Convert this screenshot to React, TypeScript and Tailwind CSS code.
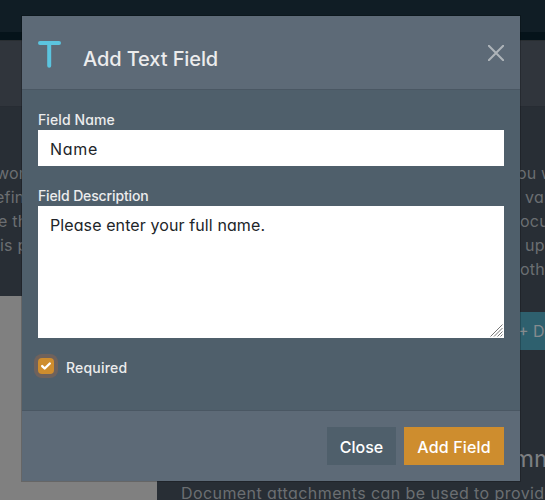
import { useState } from "react";

const introLines = [
  { start: "work", startClass: "-ml-[4px]", end: "you will", endClass: "ml-[508px]" },
  { start: "efine", startClass: "-ml-[5px]", end: "value", endClass: "ml-[525px]" },
  { start: "e the", startClass: "-ml-[2px]", end: "ocument", endClass: "ml-[520px]" },
  { start: "is pa", startClass: "ml-0", end: "upload", endClass: "ml-[525px]" },
  { start: "", startClass: "ml-0", end: "both", endClass: "ml-[510px]" },
];

function PageBehind() {
  return (
    <div className="h-[500px] overflow-hidden bg-[#282e35] text-[#6b6e72]">
      <div className="h-10 border-b-8 border-[#05131a] bg-[#101d25]" />
      <div className="h-[67px] border-y border-t-[#292e32] border-b-[#272c33] bg-[#30353c]" />
      <div className="h-[189px] pt-[54px]">
        {introLines.map((line) => (
          <div key={line.end} className="grid h-6 text-base leading-6 tracking-[0.2px] whitespace-nowrap">
            <span className={`col-start-1 row-start-1 ${line.startClass}`}>{line.start}</span>
            <span className={`col-start-1 row-start-1 ${line.endClass}`}>{line.end}</span>
          </div>
        ))}
      </div>
      <div className="flex h-[204px]">
        <div className="w-[157px] shrink-0 bg-[#808080]" />
        <div className="flex w-[388px] shrink-0 flex-col overflow-hidden pt-4 whitespace-nowrap">
          <div className="ml-[350px] h-[38px] w-[160px] bg-[#2e606e] pl-[11px] text-base leading-[39px] text-[#858b8e]">
            + Document
          </div>
          <div className="mt-[91px] ml-[356px] h-9 text-2xl leading-9 text-[#7c7f82]">mments</div>
          <p className="mt-1 ml-6 text-base leading-6 tracking-[0.42px]">
            Document attachments can be used to provide
          </p>
        </div>
      </div>
    </div>
  );
}

function TextIcon() {
  return (
    <svg width="23" height="27" viewBox="0 0 23 27" fill="none" stroke="#5bc4df" strokeWidth="4" strokeLinecap="round">
      <path d="M2 2h19M11.2 2v22.8" />
    </svg>
  );
}

export default function App() {
  const [name, setName] = useState("Name");
  const [description, setDescription] = useState("Please enter your full name.");
  const [required, setRequired] = useState(true);

  return (
    <div className="relative h-[500px] w-[545px] overflow-hidden font-['Inter',sans-serif] [font-feature-settings:'cv11']">
      <PageBehind />
      <div
        role="dialog"
        className="absolute top-[15px] left-[21px] flex h-[467px] w-[500px] flex-col border border-black/20 bg-[#4f5f6b] bg-clip-padding text-[#ececed]"
      >
        <header className="flex h-[74px] shrink-0 border-b border-[#4a5763] bg-[#5d6a77] px-4">
          <span className="mt-[25px]">
            <TextIcon />
          </span>
          <h2 className="mt-[28px] ml-[22px] text-xl leading-[30px] font-medium tracking-[-0.1px]">Add Text Field</h2>
          <button aria-label="Close dialog" className="mt-[29px] ml-auto h-4 w-4">
            <svg width="16" height="16" viewBox="0 0 16 16" stroke="#aeb4b9" strokeWidth="2" strokeLinecap="round">
              <path d="M.8.8l14.4 14.4M15.2.8L.8 15.2" />
            </svg>
          </button>
        </header>
        <div className="flex flex-1 flex-col px-4 pt-[19px]">
          <label htmlFor="name" className="h-[21px] text-sm leading-[21px] font-medium tracking-[0.1px]">Field Name</label>
          <input
            id="name"
            value={name}
            onChange={(e) => setName(e.target.value)}
            className="h-9 bg-white px-3 pt-0.5 text-base tracking-[0.7px] text-[#212529] outline-none"
          />
          <label htmlFor="description" className="mt-[19px] h-[21px] text-sm leading-[21px] font-medium tracking-[-0.13px]">Field Description</label>
          <div className="relative h-[132px] shrink-0">
            <textarea
              id="description"
              value={description}
              onChange={(e) => setDescription(e.target.value)}
              className="block h-full w-full resize-none bg-white px-3 py-[7px] text-base leading-6 tracking-[0.1px] text-[#212529] outline-none"
            />
            <svg className="absolute right-px bottom-px" width="13" height="13" viewBox="0 0 13 13" stroke="#777" strokeWidth="1">
              <path d="M.5 12.5l12-12M4 12.5l8.5-8.5M7.5 12.5l5-5M10.5 12.5l2-2" />
            </svg>
          </div>
          <label className="mt-[18px] flex h-[22px] items-center text-sm font-medium tracking-[0.2px]">
            <input
              type="checkbox"
              checked={required}
              onChange={(e) => setRequired(e.target.checked)}
              className="peer sr-only"
            />
            <span className="-mt-0.5 flex h-4 w-4 items-center justify-center rounded-[4px] bg-[#ce8d2e] shadow-[0_0_0_4px_#6f625c]">
              {required && (
                <svg width="12" height="10" viewBox="0 0 12 10" fill="none" stroke="white" strokeWidth="2.4" strokeLinecap="round" strokeLinejoin="round">
                  <path d="M2.2 5.1l2.5 2.4 5.1-5" />
                </svg>
              )}
            </span>
            <span className="mt-0.5 ml-3">Required</span>
          </label>
        </div>
        <footer className="flex h-[71px] shrink-0 justify-end gap-2 border-t border-[#4a5763] bg-[#5d6a77] px-4 pt-4 text-base font-medium text-white">
          <button className="h-[38px] w-[69px] bg-[#4f5f6b] pt-0.5">Close</button>
          <button className="h-[38px] w-[100px] bg-[#ce8d2e] pt-0.5 tracking-[0.15px] whitespace-nowrap">Add Field</button>
        </footer>
      </div>
    </div>
  );
}
